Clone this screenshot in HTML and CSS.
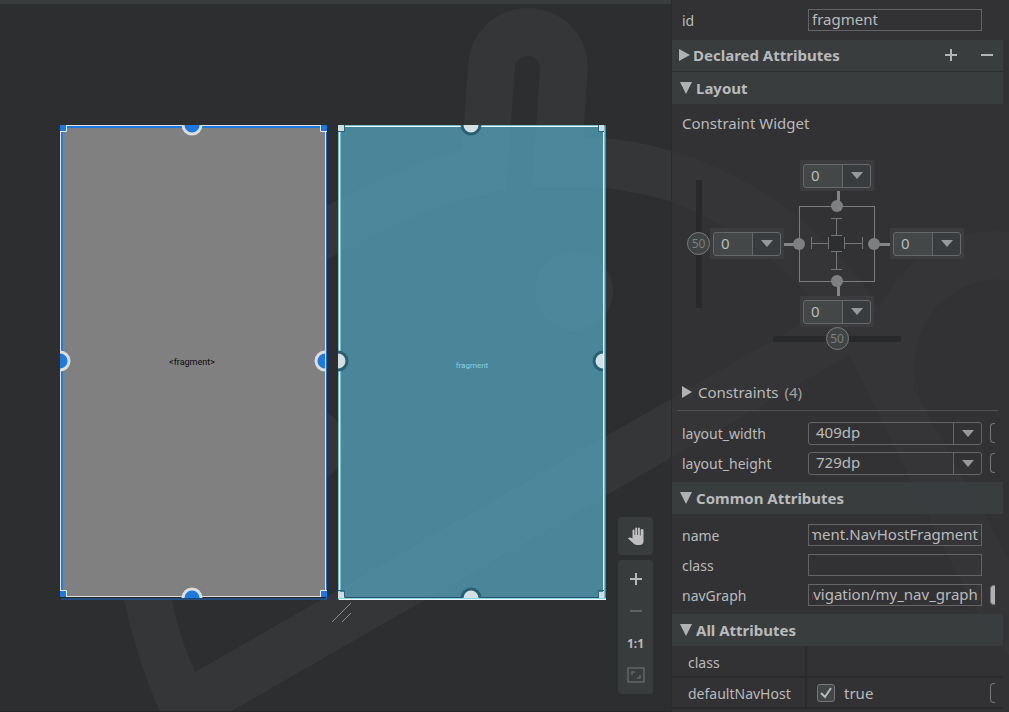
FILE: index.html
```html
<!DOCTYPE html>
<html lang="en">
<head>
<meta charset="utf-8">
<title>Layout Editor</title>
<link rel="stylesheet" href="styles.css">
</head>
<body>
<svg class="watermark" width="1009" height="712" viewBox="0 0 1009 712" aria-hidden="true">
  <path class="wm-shape" fill-rule="evenodd" d="M462 150 L468 68 A60 60 0 0 1 588 68 L583 137 Q630 138 672 151 Q800 190 879 307 Q920 234 995 231 L1009 232 V280 A84 84 0 0 0 918 340 Q908 375 920 400 L1009 560 V655 Q990 640 950 560 L849 355 L560 522 L230 712 H160 Q137 660 124 600 C105 400 180 280 330 204 Q392 170 462 150 Z M506 189 L515 68 A12 12 0 0 1 540 69 L532 187 Q600 181 669 201 Q745 228 812 298 V318 L195 672 Q180 640 172 600 C140 450 190 340 330 258 Q420 205 506 189 Z"/>
  <circle class="wm-shape" cx="574" cy="291" r="39"/>
  <circle class="wm-shape" cx="306" cy="445" r="39"/>
</svg>
<div class="app">
  <main class="canvas">
    <div class="surfaces">
      <section class="surface design" aria-label="Design surface">
        <span class="surface-label">&lt;fragment&gt;</span>
        <svg class="frame" width="268" height="475" viewBox="0 0 268 475" aria-hidden="true">
          <rect x="0" y="472" width="267" height="2" fill="#242628"/>
          <path d="M7 .5H260M.5 6V466M265.500 6V466M7 471.500H260" stroke="#e0e0e0" fill="none"/>
          <path d="M7 2H260M2 6V466" stroke="#1e7be0" stroke-width="2"/>
          <path d="M266.500 1V474M1 474H267" stroke="#1a6cc8" stroke-width="1"/>
          <path d="M0 6.500H6.500V0M267 6.500H260.500V0M0 465.500H6.500V472M267 465.500H260.500V472" stroke="#e8e8e8" fill="none"/>
          <path d="M0 0H6V6H0ZM261 0H267V6H261ZM0 466H6V472H0ZM261 466H267V472H261Z" fill="#1b79df"/>
          <g fill="#1b79df" stroke="#dcdcdc" stroke-width="3">
            <path d="M123 0A9 9 0 0 0 141 0M123 473A9 9 0 0 1 141 473M0 227A9 9 0 0 1 0 245M265 227A9 9 0 0 0 265 245"/>
          </g>
        </svg>
      </section>
      <section class="surface blueprint" aria-label="Blueprint surface">
        <span class="surface-label">fragment</span>
        <svg class="frame" width="268" height="475" viewBox="0 0 268 475" aria-hidden="true">
          <path d="M.5 1V474M2.500 6V466M7 .5H260M266.500 1V474" stroke="#78bccf"/>
          <path d="M1.500 6V474M7 1.500H266M265.500 1V474M1 474.500H268" stroke="#e6f6fa"/>
          <path d="M7 472.500H261" stroke="#235365"/>
          <path d="M0 473.500H268" stroke="#8bd3e8"/>
          <path d="M0 6.500H6.500V0M266 6.500H260.500V0M0 465.500H6.500V472M266 465.500H260.500V472" stroke="#2b6478" fill="none"/>
          <path d="M0 0H6V6H0ZM261 0H266V6H261ZM0 467H6V473H0ZM261 467H266V473H261Z" fill="#cfdde3"/>
          <g fill="#d3e0e5" stroke="#2a5f72" stroke-width="3">
            <path d="M124 0A9 9 0 0 0 142 0M124 473A9 9 0 0 1 142 473M0 227A9 9 0 0 1 0 245M265 227A9 9 0 0 0 265 245"/>
          </g>
        </svg>
      </section>
    </div>
    <svg class="resize-grip" width="21" height="21" viewBox="0 0 21 21" aria-hidden="true"><path d="M1 20L20 1M11 20L20 11" stroke="#8b8c8d"/></svg>
    <div class="tools">
      <div class="tool-group single">
        <button type="button" class="tool" aria-label="Pan"><svg width="18" height="20" viewBox="0 0 18 20"><path d="M5.500 11V4.500A1 1 0 0 1 7.500 4.500V9H8.200V2.500A1 1 0 0 1 10.200 2.500V9H10.900V2.500A1 1 0 0 1 12.900 2.500V9.500H13.600V4.500A1.100 1.100 0 0 1 16.500 4.500V15Q16.500 19 12.500 19H10Q7.500 19 6 17L1 12.500Q2.500 10.500 5.500 12.500Z" fill="#bfbfbf"/></svg></button>
      </div>
      <div class="tool-group">
        <button type="button" class="tool" aria-label="Zoom in"><svg width="14" height="14" viewBox="0 0 14 14"><path d="M1 7H13M7 1V13" stroke="#b8b9ba" stroke-width="2"/></svg></button>
        <button type="button" class="tool" aria-label="Zoom out"><svg width="14" height="14" viewBox="0 0 14 14"><path d="M1 7H13" stroke="#606364" stroke-width="2"/></svg></button>
        <button type="button" class="tool ratio">1:1</button>
        <button type="button" class="tool" aria-label="Zoom to fit"><svg width="18" height="16" viewBox="0 0 18 16"><path d="M1 1H17V15H1ZM5 8V5H8M10 11H13V8" stroke="#626566" stroke-width="1.500" fill="none"/></svg></button>
      </div>
    </div>
  </main>

  <aside class="panel">
    <div class="row id-row">
      <label for="f-id">id</label>
      <input class="field" id="f-id" type="text" value="fragment">
    </div>
    <header class="section declared">
      <svg width="11" height="12" viewBox="0 0 11 12"><path d="M0 0L11 6L0 12Z"/></svg>
      <h2>Declared Attributes</h2>
      <button type="button" class="icon-btn" aria-label="Add attribute"><svg width="14" height="14" viewBox="0 0 14 14"><path d="M1 7H13M7 1V13" stroke="#b4b5b6" stroke-width="2"/></svg></button>
      <button type="button" class="icon-btn" aria-label="Remove attribute"><svg width="14" height="14" viewBox="0 0 14 14"><path d="M1 7H13" stroke="#b4b5b6" stroke-width="2"/></svg></button>
    </header>
    <header class="section">
      <svg width="12" height="12" viewBox="0 0 12 12"><path d="M0 0H12L6 12Z"/></svg>
      <h2>Layout</h2>
    </header>
    <h3 class="widget-title">Constraint Widget</h3>
    <div class="widget">
      <div class="bias vertical">
        <input type="range" min="0" max="100" value="50" aria-label="Vertical bias">
        <output>50</output>
      </div>
      <div class="margin top"><select aria-label="Top margin"><option>0</option></select><svg width="12" height="7" viewBox="0 0 12 7"><path d="M0 0H12L6 7Z"/></svg></div>
      <div class="margin left"><select aria-label="Left margin"><option>0</option></select><svg width="12" height="7" viewBox="0 0 12 7"><path d="M0 0H12L6 7Z"/></svg></div>
      <svg class="anchors" width="106" height="105" viewBox="0 0 106 105" aria-hidden="true">
        <path d="M16 15.500H91M16 90.500H91M15.500 15V91M90.500 15V91" stroke="#7a7c7d"/>
        <path d="M54.500 0V15M54.500 90V105M0 53.500H16M91 53.500H106" stroke="#848586" stroke-width="3"/>
        <g fill="#7e7f80"><circle cx="53" cy="15" r="6"/><circle cx="53" cy="90" r="6"/><circle cx="15" cy="53" r="6"/><circle cx="90" cy="53" r="6"/></g>
        <rect x="45" y="45" width="15" height="15" fill="#2d2e30"/>
        <path d="M47 27.500H58M52.500 27V44M47 44.500H58M47 60.500H58M52.500 60V78M47 78.500H58M27.500 46V58M27 52.500H44M44.500 46V58M60.500 46V58M60 52.500H78M78.500 46V58" stroke="#747677" fill="none"/>
      </svg>
      <div class="margin right"><select aria-label="Right margin"><option>0</option></select><svg width="12" height="7" viewBox="0 0 12 7"><path d="M0 0H12L6 7Z"/></svg></div>
      <div class="margin bottom"><select aria-label="Bottom margin"><option>0</option></select><svg width="12" height="7" viewBox="0 0 12 7"><path d="M0 0H12L6 7Z"/></svg></div>
      <div class="bias horizontal">
        <input type="range" min="0" max="100" value="50" aria-label="Horizontal bias">
        <output>50</output>
      </div>
    </div>
    <div class="constraints">
      <svg width="10" height="12" viewBox="0 0 10 12"><path d="M0 0L10 6L0 12Z"/></svg>
      <span>Constraints</span><span class="count">(4)</span>
    </div>
    <div class="rows">
      <div class="row">
        <label for="f-w">layout_width</label>
        <div class="combo"><input id="f-w" type="text" value="409dp"><button type="button" aria-label="Width options"><svg width="12" height="7" viewBox="0 0 12 7"><path d="M0 0H12L6 7Z"/></svg></button></div>
        <button type="button" class="pill" aria-label="Pick a width resource"></button>
      </div>
      <div class="row">
        <label for="f-h">layout_height</label>
        <div class="combo"><input id="f-h" type="text" value="729dp"><button type="button" aria-label="Height options"><svg width="12" height="7" viewBox="0 0 12 7"><path d="M0 0H12L6 7Z"/></svg></button></div>
        <button type="button" class="pill" aria-label="Pick a height resource"></button>
      </div>
    </div>
    <header class="section">
      <svg width="12" height="12" viewBox="0 0 12 12"><path d="M0 0H12L6 12Z"/></svg>
      <h2>Common Attributes</h2>
    </header>
    <div class="rows common">
      <div class="row">
        <label for="f-name">name</label>
        <input class="field show-end" id="f-name" type="text" value="androidx.navigation.fragment.NavHostFragment">
      </div>
      <div class="row">
        <label for="f-class">class</label>
        <input class="field" id="f-class" type="text">
      </div>
      <div class="row">
        <label for="f-graph">navGraph</label>
        <input class="field show-end" id="f-graph" type="text" value="@navigation/my_nav_graph">
        <button type="button" class="pill filled" aria-label="Pick a navigation resource"></button>
      </div>
    </div>
    <header class="section">
      <svg width="12" height="12" viewBox="0 0 12 12"><path d="M0 0H12L6 12Z"/></svg>
      <h2>All Attributes</h2>
    </header>
    <table class="attrs">
      <tr><th scope="row">class</th><td></td></tr>
      <tr><th scope="row">defaultNavHost</th><td><div class="cell">
        <label class="check"><input type="checkbox" checked><svg width="18" height="18" viewBox="0 0 18 18"><path d="M4 9L8 13L14 4" fill="none" stroke="#b9babb" stroke-width="2"/></svg><span>true</span></label>
        <button type="button" class="pill" aria-label="Pick a boolean resource"></button></div></td></tr>
    </table>
  </aside>
</div>
<script src="main.js"></script>
</body>
</html>
```

FILE: styles.css
```css
* { box-sizing: border-box; }

body {
  margin: 0;
  background: #2d2e30;
  color: #b9babb;
  font-family: "Noto Sans", "Open Sans", sans-serif;
  font-size: 15px;
  overflow: hidden;
}

h2, h3 { margin: 0; }

button, input, select {
  font: inherit;
  color: inherit;
  margin: 0;
  padding: 0;
  border: 0;
  border-radius: 0;
  background: none;
  outline: 0;
}

.watermark {
  position: absolute;
  top: 0;
  left: 0;
  z-index: -1;
}

.wm-shape { fill: #353638; }

.app {
  display: grid;
  grid-template-columns: minmax(0, 1fr) 338px;
  min-height: 100vh;
}

/* Canvas */
.canvas {
  position: relative;
  border-top: 4px solid #3a3d3e;
  border-bottom: 1px solid #262729;
}

.surfaces {
  display: flex;
  gap: 10px;
  padding: 121px 0 0 60px;
}

.surface {
  position: relative;
  display: grid;
  place-items: center;
  width: 268px;
  height: 475px;
}

.design {
  background: linear-gradient(#808080, #808080) no-repeat 0 0 / 267px 472px;
  padding: 0 4px 2px 0;
}

.blueprint { background: rgba(84, 164, 190, 0.75); }

.frame {
  position: absolute;
  top: 0;
  left: 0;
}

.surface-label {
  font-family: Roboto, sans-serif;
  font-size: 9px;
  line-height: 12px;
  color: #0c0c0c;
}

.blueprint .surface-label {
  font-size: 8px;
  color: #86cfe3;
  padding-top: 6px;
}

.resize-grip {
  position: absolute;
  top: 598px;
  left: 331px;
}

.tools {
  position: absolute;
  right: 18px;
  bottom: 17px;
  width: 35px;
  display: grid;
  gap: 5px;
}

.tool-group {
  display: grid;
  background: #393c3d;
  border-radius: 4px;
  padding: 3px 0;
}

.tool {
  display: grid;
  place-items: center;
  height: 32px;
}

.ratio {
  font-size: 12px;
  font-weight: 700;
}

/* Attributes panel */
.panel {
  background: rgba(53, 54, 56, 0.6);
  border-left: 1px solid #2a2b2d;
  padding-right: 6px;
}

.row {
  display: flex;
  align-items: center;
  height: 30px;
  padding-left: 10px;
}

.row label {
  width: 126px;
  flex: none;
  font-size: 14px;
  line-height: 20px;
  padding-top: 1px;
}

.id-row { height: 40px; }

.field {
  width: 174px;
  height: 22px;
  border: 1px solid #626465;
  padding: 0 3px 2px;
  line-height: 18px;
}

.section {
  display: flex;
  align-items: center;
  gap: 4px;
  height: 32px;
  padding-left: 8px;
  background: rgba(60, 64, 65, 0.8);
}

.section svg, .constraints svg, .margin svg, .combo svg { fill: #b0b1b2; flex: none; }

.section h2 {
  flex: 1;
  font-size: 15px;
  line-height: 20px;
}

.declared {
  gap: 3px;
  padding: 0 0 2px 7px;
  border-bottom: 1px solid #2c2d2f;
}

.icon-btn {
  display: grid;
  place-items: center;
  width: 33px;
  height: 24px;
}

.widget-title {
  padding-left: 10px;
  font-size: 15px;
  font-weight: 400;
  line-height: 20px;
  margin-top: 9px;
}

.widget {
  display: grid;
  grid-template-columns: 23px 74px 106px 74px;
  grid-template-rows: 31px 105px 31px 23px;
  padding-left: 15px;
  margin-top: 27px;
}

.margin {
  display: grid;
  grid-template-columns: 39px 29px;
  place-items: center;
  place-content: center;
  width: 74px;
  height: 31px;
  background: rgba(62, 63, 65, 0.8);
}

.margin select {
  appearance: none;
  grid-area: 1 / 1 / 2 / 3;
  width: 68px;
  height: 24px;
  border: 1px solid #66686a;
  border-radius: 3px;
  padding: 0 0 1px 7px;
  background: linear-gradient(90deg, #434748 38px, #66686a 38px, #66686a 39px, #393c3e 39px);
}

.margin svg {
  grid-area: 1 / 2;
  pointer-events: none;
  fill: #97999a;
}

.top { grid-area: 1 / 3; justify-self: center; }
.left { grid-area: 2 / 2; align-self: center; }
.anchors { grid-area: 2 / 3; }
.right { grid-area: 2 / 4; align-self: center; }
.bottom { grid-area: 3 / 3; justify-self: center; }

.bias {
  display: grid;
  place-items: center;
}

.bias input, .bias output { grid-area: 1 / 1; }

.bias output {
  font-size: 12px;
  line-height: 16px;
  color: #7c7e7f;
  pointer-events: none;
}

.bias input {
  appearance: none;
  width: 128px;
  height: 23px;
}

.bias input::-webkit-slider-runnable-track {
  height: 23px;
  background: linear-gradient(#28292b, #28292b) no-repeat center / 100% 6px;
}

.bias input::-webkit-slider-thumb {
  appearance: none;
  width: 23px;
  height: 23px;
  border: 1px solid #7a7c7d;
  border-radius: 50%;
  background: #404445;
}

.vertical { grid-area: 2 / 1; }

.vertical input {
  writing-mode: vertical-lr;
  width: 23px;
  height: 128px;
  margin: -12px 0;
}

.vertical input::-webkit-slider-runnable-track {
  width: 23px;
  height: 128px;
  background-size: 6px 100%;
}

.horizontal { grid-area: 4 / 3; justify-self: center; }

.constraints {
  display: flex;
  align-items: center;
  height: 36px;
  margin: 25px 5px 0 5px;
  padding: 0 0 2px 5px;
  border-bottom: 1px solid #505253;
  font-size: 15px;
}

.constraints svg { margin-right: 6px; }

.count {
  margin-left: 6px;
  color: #a3a09a;
}

.rows { padding: 7px 0 4px; }

.combo {
  display: flex;
  width: 174px;
  height: 23px;
  border: 1px solid #626465;
  border-radius: 3px;
}

.combo input {
  flex: 1;
  min-width: 0;
  padding: 0 0 2px 7px;
  line-height: 18px;
}

.combo button {
  display: grid;
  place-items: center;
  width: 28px;
  border-left: 1px solid #626465;
}

.combo svg { fill: #97999a; }

.pill {
  width: 5px;
  height: 20px;
  margin-left: 8px;
  border: 1px solid #747677;
  border-right: 0;
  border-radius: 4px 0 0 4px;
}

.filled { background: #b0b1b2; }

.common { padding: 6px 0 4px; }

.attrs {
  width: 100%;
  border-collapse: collapse;
}

.attrs tr {
  height: 31px;
  border-bottom: 2px solid #2a2b2d;
}

.attrs th {
  width: 134px;
  padding: 3px 0 0 16px;
  font-size: 14px;
  line-height: 20px;
  font-weight: 400;
  text-align: left;
  border-right: 2px solid #2a2b2d;
}

.attrs td { padding: 0 8px 0 10px; }

.cell {
  display: flex;
  justify-content: space-between;
  align-items: center;
}

.check {
  display: grid;
  grid-template-columns: 18px auto;
  align-items: center;
  column-gap: 9px;
  line-height: 20px;
}

.check input {
  appearance: none;
  grid-area: 1 / 1;
  width: 18px;
  height: 18px;
  border: 1px solid #747677;
  border-radius: 3px;
  background: #434748;
}

.check svg {
  grid-area: 1 / 1;
  pointer-events: none;
}
```

FILE: main.js
```js
// Long values show their last segment, like the IDE's own fields.
document.querySelectorAll('.show-end').forEach(function (field) {
  field.scrollLeft = field.scrollWidth;
});
```
